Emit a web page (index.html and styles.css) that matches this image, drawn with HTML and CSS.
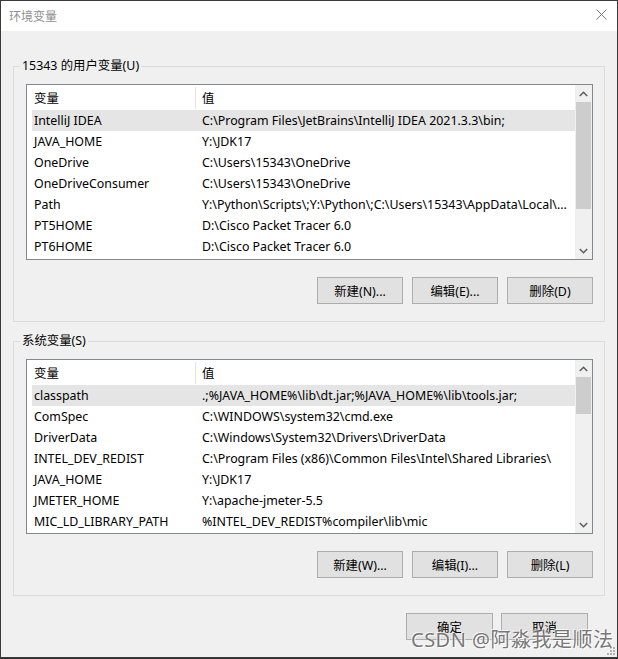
FILE: index.html
```html
<!DOCTYPE html>
<html lang="zh-CN">
<head>
<meta charset="utf-8">
<title>环境变量</title>
<link rel="stylesheet" href="styles.css">
</head>
<body>
<div class="window">
  <div class="titlebar">
    <span class="title">环境变量</span>
    <svg class="close" width="11" height="11" viewBox="0 0 11 11"><path d="M0.5 0.5 L10.5 10.5 M10.5 0.5 L0.5 10.5" stroke="#7a7a7a" stroke-width="1" fill="none"/></svg>
  </div>
  <div class="content">
    <fieldset class="group">
      <legend>15343 的用户变量(U)</legend>
      <div class="list">
        <div class="list-main">
          <div class="head"><span class="h1">变量</span><span class="h2">值</span></div>
          <div class="row sel"><span class="c1">IntelliJ IDEA</span><span class="c2">C:\Program Files\JetBrains\IntelliJ IDEA 2021.3.3\bin;</span></div>
          <div class="row"><span class="c1">JAVA_HOME</span><span class="c2">Y:\JDK17</span></div>
          <div class="row"><span class="c1">OneDrive</span><span class="c2">C:\Users\15343\OneDrive</span></div>
          <div class="row"><span class="c1">OneDriveConsumer</span><span class="c2">C:\Users\15343\OneDrive</span></div>
          <div class="row"><span class="c1">Path</span><span class="c2">Y:\Python\Scripts\;Y:\Python\;C:\Users\15343\AppData\Local\...</span></div>
          <div class="row"><span class="c1">PT5HOME</span><span class="c2">D:\Cisco Packet Tracer 6.0</span></div>
          <div class="row"><span class="c1">PT6HOME</span><span class="c2">D:\Cisco Packet Tracer 6.0</span></div>
        </div>
        <div class="scrollbar">
          <div class="arrow"><svg width="9" height="6" viewBox="0 0 9 6"><path d="M0.8 5 L4.5 1.3 L8.2 5" stroke="#606060" stroke-width="1.6" fill="none"/></svg></div>
          <div class="track"><div class="thumb" style="height:107px"></div></div>
          <div class="arrow"><svg width="9" height="6" viewBox="0 0 9 6"><path d="M0.8 1 L4.5 4.7 L8.2 1" stroke="#606060" stroke-width="1.6" fill="none"/></svg></div>
        </div>
      </div>
      <div class="buttons">
        <button class="btn">新建(N)...</button>
        <button class="btn">编辑(E)...</button>
        <button class="btn">删除(D)</button>
      </div>
    </fieldset>

    <fieldset class="group group-sys">
      <legend>系统变量(S)</legend>
      <div class="list list-sys">
        <div class="list-main">
          <div class="head"><span class="h1">变量</span><span class="h2">值</span></div>
          <div class="row sel"><span class="c1">classpath</span><span class="c2">.;%JAVA_HOME%\lib\dt.jar;%JAVA_HOME%\lib\tools.jar;</span></div>
          <div class="row"><span class="c1">ComSpec</span><span class="c2">C:\WINDOWS\system32\cmd.exe</span></div>
          <div class="row"><span class="c1">DriverData</span><span class="c2">C:\Windows\System32\Drivers\DriverData</span></div>
          <div class="row"><span class="c1">INTEL_DEV_REDIST</span><span class="c2">C:\Program Files (x86)\Common Files\Intel\Shared Libraries\</span></div>
          <div class="row"><span class="c1">JAVA_HOME</span><span class="c2">Y:\JDK17</span></div>
          <div class="row"><span class="c1">JMETER_HOME</span><span class="c2">Y:\apache-jmeter-5.5</span></div>
          <div class="row"><span class="c1">MIC_LD_LIBRARY_PATH</span><span class="c2">%INTEL_DEV_REDIST%compiler\lib\mic</span></div>
        </div>
        <div class="scrollbar">
          <div class="arrow"><svg width="9" height="6" viewBox="0 0 9 6"><path d="M0.8 5 L4.5 1.3 L8.2 5" stroke="#606060" stroke-width="1.6" fill="none"/></svg></div>
          <div class="track"><div class="thumb" style="height:37px"></div></div>
          <div class="arrow"><svg width="9" height="6" viewBox="0 0 9 6"><path d="M0.8 1 L4.5 4.7 L8.2 1" stroke="#606060" stroke-width="1.6" fill="none"/></svg></div>
        </div>
      </div>
      <div class="buttons">
        <button class="btn">新建(W)...</button>
        <button class="btn">编辑(I)...</button>
        <button class="btn">删除(L)</button>
      </div>
    </fieldset>

    <div class="footer">
      <button class="btn btn-wide">确定</button>
      <button class="btn btn-wide">取消</button>
    </div>
  </div>
  <div class="watermark">CSDN @阿淼我是顺法</div>
  <svg class="grip" width="8" height="8" viewBox="0 0 8 8">
    <rect x="6" y="0" width="2" height="2" fill="#b0b0b0"/>
    <rect x="3" y="3" width="2" height="2" fill="#b0b0b0"/>
    <rect x="6" y="3" width="2" height="2" fill="#b0b0b0"/>
    <rect x="0" y="6" width="2" height="2" fill="#b0b0b0"/>
    <rect x="3" y="6" width="2" height="2" fill="#b0b0b0"/>
    <rect x="6" y="6" width="2" height="2" fill="#b0b0b0"/>
  </svg>
</div>
</body>
</html>
```

FILE: styles.css
```css
* { box-sizing: border-box; }

html, body {
  margin: 0;
  padding: 0;
}

body {
  background: #2e2e2e;
  font-family: "Noto Sans", "Noto Sans CJK SC", sans-serif;
  font-size: 12.4px;
  color: #000;
  width: 618px;
  height: 659px;
  overflow: hidden;
}

.window {
  position: relative;
  width: 618px;
  height: 658px;
  border: 1px solid #3a3a3a;
  background: #f0f0f0;
  display: flex;
  flex-direction: column;
}

.titlebar {
  height: 30px;
  background: #fff;
  display: flex;
  align-items: center;
  justify-content: space-between;
  padding: 0 10px 0 8px;
  flex: none;
}

.title {
  font-family: "Noto Sans CJK SC", sans-serif;
  font-size: 12px;
  color: #8f8f8f;
  line-height: 16px;
}

.close {
  display: block;
  margin-top: -3px;
}

.content {
  padding: 27px 12px 0 12px;
  display: flex;
  flex-direction: column;
}

.group {
  margin: 0;
  border: 1px solid #dcdcdc;
  padding: 10px 11px 17px 12px;
  min-width: 0;
}

.group legend {
  padding: 0 2px;
  margin-left: -6px;
  line-height: 16px;
  font-family: "Noto Sans", "Noto Sans CJK SC", sans-serif;
  color: #000;
}

.group-sys {
  margin-top: 11px;
}

.list {
  height: 176px;
  border: 1px solid #828790;
  background: #fff;
  display: flex;
}

.list-sys {
  height: 175px;
}

.list-main {
  flex: 1;
  min-width: 0;
}

.head {
  height: 25px;
  display: flex;
  align-items: stretch;
}

.head span {
  display: flex;
  align-items: center;
}

.h1 {
  width: 168px;
  padding-left: 7px;
  flex: none;
}

.h2 {
  border-left: 1px solid #e5e5e5;
  padding-left: 6px;
  margin: 2px 0 1px;
}

.row {
  height: 21px;
  margin-left: 5px;
  display: flex;
  align-items: center;
  white-space: nowrap;
  overflow: hidden;
}

.row.sel {
  background: #e5e5e5;
}

.c1 {
  width: 170px;
  padding-left: 2px;
  flex: none;
}

.c2 {
  flex: none;
}

.scrollbar {
  width: 17px;
  flex: none;
  background: #f0f0f0;
  display: flex;
  flex-direction: column;
}

.arrow {
  height: 17px;
  flex: none;
  display: flex;
  align-items: center;
  justify-content: center;
}

.arrow svg {
  display: block;
}

.track {
  flex: 1;
  padding: 0 1px;
}

.thumb {
  background: #cdcdcd;
}

.buttons {
  margin-top: 17px;
  display: flex;
  justify-content: flex-end;
  gap: 9px;
}

.btn {
  width: 86px;
  height: 27px;
  margin: 0;
  padding: 0;
  border: 1px solid #adadad;
  background: #e1e1e1;
  font-family: "Noto Sans", "Noto Sans CJK SC", sans-serif;
  font-size: 12.4px;
  color: #000;
}

.footer {
  margin-top: 17px;
  padding-right: 17px;
  display: flex;
  justify-content: flex-end;
  gap: 8px;
}

.btn-wide {
  width: 87px;
}

.watermark {
  position: absolute;
  left: 410px;
  top: 627px;
  font-family: "Noto Sans", "Noto Sans CJK SC", sans-serif;
  font-size: 20px;
  line-height: 24px;
  color: rgba(85, 85, 85, 0.8);
  text-shadow: 1px 1px 0 rgba(255, 255, 255, 0.9), -1px -1px 0 rgba(255, 255, 255, 0.7);
  white-space: nowrap;
  letter-spacing: 0.5px;
}

.grip {
  position: absolute;
  right: 2px;
  bottom: 2px;
}
```
